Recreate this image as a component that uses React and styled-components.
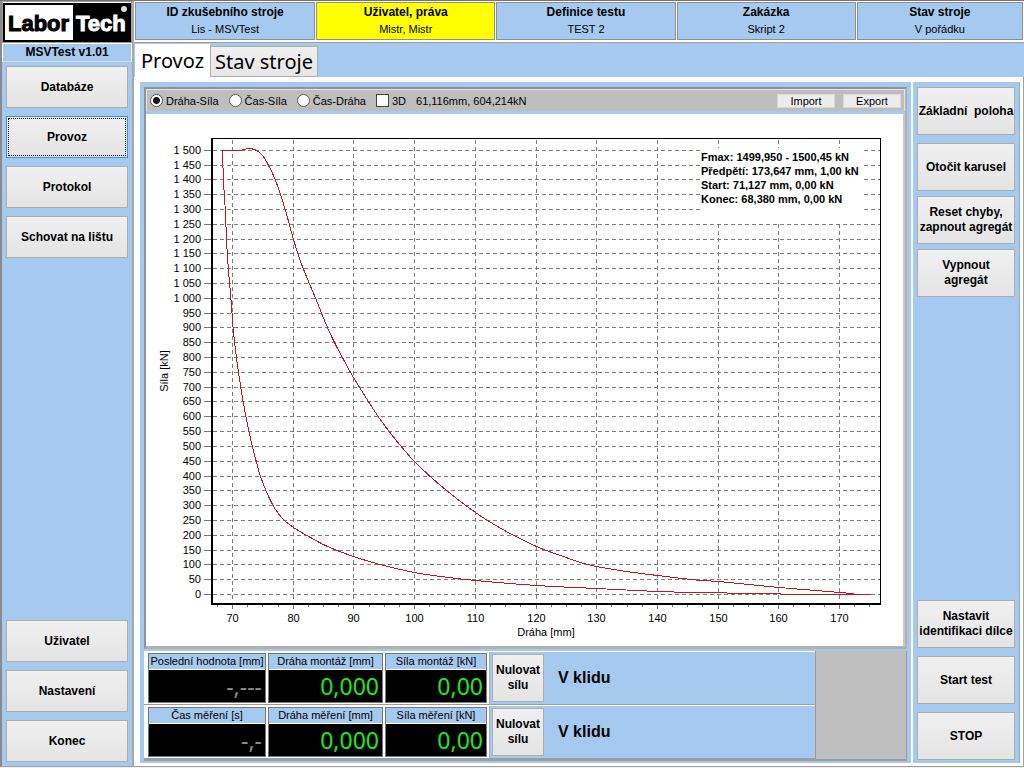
import React, { useState } from 'react';
import styled, { createGlobalStyle } from 'styled-components';

const BLUE = '#a6c9ef';
const SANS = '"Liberation Sans", Arial, sans-serif';
const TAHOMA = 'Tahoma, "Noto Sans", sans-serif';

const Global = createGlobalStyle`
  *, *::before, *::after { box-sizing: border-box; }
  body { margin: 0; background: #fff; color: #000; font-family: ${SANS}; font-size: 12px; }
`;

const Page = styled.div`
  display: grid;
  grid-template-columns: 134px minmax(0, 1fr);
  min-height: 100vh;
  border-top: 1px solid #777273;
  border-bottom: 1px solid #f0f0f0;
`;

const Sidebar = styled.aside`
  display: flex;
  flex-direction: column;
  background: ${BLUE};
  border-left: 2px solid #8a8a8c;
  border-right: 2px solid #a9a9a9;
  border-bottom: 1px solid #a0a0a0;
`;

const LogoBox = styled.div`
  height: 42px;
  background: #fff;
  border: 1px solid #999;
  svg { display: block; width: 100%; height: 100%; }
`;

const Version = styled.div`
  height: 19px;
  line-height: 17px;
  text-align: center;
  font-weight: bold;
  border: 1px solid #fff;
  border-bottom-color: #d8d8d8;
`;

const Nav = styled.nav`
  flex: 1;
  display: flex;
  flex-direction: column;
  gap: 8px;
  padding: 4px;
`;

const Spacer = styled.div`
  flex: 1;
`;

const Button = styled.button`
  width: 100%;
  height: ${(p) => (p.$tall ? 48 : 42)}px;
  padding: 0;
  border: 1px solid ${(p) => (p.$focused ? '#3c8ee0' : '#adadad')};
  outline: ${(p) => (p.$focused ? '1px dotted #000' : 'none')};
  outline-offset: -3px;
  border-radius: 0;
  background: linear-gradient(#f0f0f0, #e4e4e4);
  color: #000;
  font: bold 12px/15px ${SANS};
  white-space: pre-line;
`;

const Main = styled.main`
  display: flex;
  flex-direction: column;
  min-width: 0;
`;

const Header = styled.header`
  display: grid;
  grid-template-columns: 181fr 180fr 180fr 180fr 167fr;
  gap: 1px;
  height: 42px;
  padding: 1px 1px 2px;
  background: #fff;
  border-bottom: 1px solid #a0a0a0;
`;

const HeaderCell = styled.div`
  display: flex;
  flex-direction: column;
  align-items: center;
  border: 1px solid #8c8f94;
  background: ${(p) => (p.$alert ? '#ffff00' : BLUE)};
  font-size: 11px;
  line-height: 17px;
  padding-top: 1px;
`;

const HeaderTitle = styled.b`
  font-size: 12px;
`;

const Tabs = styled.div`
  display: flex;
  align-items: flex-end;
  height: 34px;
  background: ${BLUE};
  padding-left: 1px;
`;

const Tab = styled.button`
  height: ${(p) => (p.$active ? 33 : 31)}px;
  width: ${(p) => (p.$active ? 75 : 108)}px;
  padding: 0;
  border: ${(p) => (p.$active ? '0' : '1px solid #adadad')};
  background: ${(p) => (p.$active ? '#fff' : 'linear-gradient(#f0f0f0, #e6e6e6)')};
  font: 20px/28px ${TAHOMA};
  text-align: center;
  white-space: nowrap;
`;

const Panel = styled.div`
  flex: 1;
  display: grid;
  grid-template-columns: minmax(0, 1fr) 107px;
  gap: 2px;
  padding: 5px 3px 3px 6px;
  background: #fff;
  border-right: 1px solid #a0a0a0;
  border-bottom: 1px solid #a0a0a0;
`;

const Work = styled.section`
  display: flex;
  flex-direction: column;
  padding: 5px 4px 2px;
  background: ${BLUE};
`;

const ChartPanel = styled.div`
  flex: 1;
  display: flex;
  flex-direction: column;
  border: 2px solid #8f9296;
  border-right-color: #b0b0b0;
  border-bottom-color: #b0b0b0;
  background: #fff;
`;

const Toolbar = styled.div`
  display: flex;
  align-items: center;
  height: 22px;
  padding: 0 3px;
  background: #bebebe;
  border: 1px solid #e4e4e4;
  border-bottom: 0;
  font-size: 11px;
`;

const Option = styled.label`
  display: flex;
  align-items: center;
  gap: 3px;
  margin-right: 10px;
`;

const Radio = styled.input.attrs({ type: 'radio' })`
  appearance: none;
  width: 13px;
  height: 13px;
  margin: 0;
  border: 1px solid #555;
  border-radius: 50%;
  background: #fff;
  &:checked { background: radial-gradient(circle, #111 0 3px, #fff 4px); }
`;

const Check = styled.input.attrs({ type: 'checkbox' })`
  appearance: none;
  width: 13px;
  height: 13px;
  margin: 0;
  border: 1px solid #444;
  background: #fff;
  &:checked { background: #333; }
`;

const SmallButton = styled.button`
  width: 58px;
  height: 14px;
  margin-left: 8px;
  padding: 0;
  border: 1px solid #d8d8d8;
  background: #ececec;
  font: 11px/12px ${SANS};
`;

const ChartArea = styled.div`
  flex: 1;
  display: flex;
  border-top: 3px solid ${BLUE};
  border-right: 2px solid #c8c8c8;
  border-bottom: 1px solid #b4b4b4;
`;

const ChartSvg = styled.svg`
  flex: 1;
  width: 100%;
  min-height: 300px;
  text { font-family: ${SANS}; font-size: 11px; fill: #000; }
`;

const Readouts = styled.div`
  display: grid;
  grid-template-columns: minmax(0, 1fr) 92px;
  height: 110px;
  margin-top: 2px;
  border-bottom: 2px solid #9c9c9c;
`;

const ReadoutRow = styled.div`
  display: grid;
  grid-template-columns: 118px 115px 102px minmax(0, 1fr);
  column-gap: 2px;
  height: 54px;
  padding: 2px 0 0 4px;
  background: #fff;
  border-bottom: 1px solid #9c9c9c;
`;

const Cell = styled.div`
  display: flex;
  flex-direction: column;
  height: 50px;
  border: 1px solid #777;
`;

const CellLabel = styled.div`
  height: 16px;
  background: ${BLUE};
  border-bottom: 1px solid #fff;
  font: 11px/15px ${SANS};
  text-align: center;
  white-space: nowrap;
`;

const CellValue = styled.output`
  flex: 1;
  padding-right: 3px;
  background: #000;
  color: ${(p) => (p.$idle ? '#8c8c8c' : '#1fe81f')};
  font: 23px/32px ${TAHOMA};
  text-align: right;
`;

const Status = styled.div`
  display: flex;
  align-items: center;
  gap: 14px;
  margin-top: -1px;
  height: 52px;
  padding-left: 2px;
  background: ${BLUE};
  border-left: 1px solid #aaa;
  font-size: 16px;
  font-weight: bold;
`;

const ResetBox = styled.div`
  width: 52px;
`;

const Filler = styled.div`
  background: #bfbfbf;
  border-left: 1px solid #999;
  border-right: 1px solid #999;
`;

const Actions = styled.aside`
  display: flex;
  flex-direction: column;
  gap: 8px;
  padding: 5px 4px 3px;
  background: ${BLUE};
  border-right: 1px solid #8fa8c4;
`;

const ActionGroup = styled.div`
  display: flex;
  flex-direction: column;
  gap: 5px;
`;

const headerCells = [
  ['ID zkušebního stroje', 'Lis - MSVTest'],
  ['Uživatel, práva', 'Mistr, Mistr', true],
  ['Definice testu', 'TEST 2'],
  ['Zakázka', 'Skript 2'],
  ['Stav stroje', 'V pořádku'],
];

const readouts = [
  [['Poslední hodnota [mm]', '-,---', true], ['Dráha montáž [mm]', '0,000'], ['Síla montáž [kN]', '0,00']],
  [['Čas měření [s]', '-,-', true], ['Dráha měření [mm]', '0,000'], ['Síla měření [kN]', '0,00']],
];

const loading = [
  [222, 150], [238, 150], [243, 149], [249, 148], [256, 150], [262, 155], [267, 163], [273, 175], [279, 191],
  [285, 210], [293, 239], [300, 261], [308, 281], [316, 300], [324, 320], [333, 340], [343, 359], [353, 377],
  [377, 415], [395, 439], [414, 461], [440, 485], [475, 512], [504, 530], [536, 546], [560, 555], [580, 562],
  [596, 566], [626, 571], [657, 575], [700, 580], [718, 581], [779, 587], [840, 592], [858, 594], [870, 594],
];

const unloading = [
  [222, 150], [223, 181], [225, 213], [226, 240], [228, 270], [231, 305], [233, 332], [237, 365], [243, 403],
  [250, 438], [255, 458], [260, 476], [268, 496], [275, 509], [283, 519], [293, 527], [310, 537], [327, 546],
  [353, 556], [383, 565], [414, 572], [440, 576], [475, 580], [536, 585], [596, 588], [657, 591], [697, 592],
  [756, 593], [810, 594], [870, 594],
];

// Catmull-Rom spline through the measured points
function smooth(pts) {
  let d = `M${pts[0]}`;
  for (let i = 0; i < pts.length - 1; i += 1) {
    const [a, b, c, e] = [pts[i - 1] || pts[i], pts[i], pts[i + 1], pts[i + 2] || pts[i + 1]];
    d += ` C${b[0] + (c[0] - a[0]) / 6},${b[1] + (c[1] - a[1]) / 6} ${c[0] - (e[0] - b[0]) / 6},${c[1] - (e[1] - b[1]) / 6} ${c}`;
  }
  return d;
}

const px = (v) => Math.round(232 + (v - 70) * 6.07) + 0.5;
const py = (v) => Math.round(594 - v * 0.2962) + 0.5;
const xTicks = Array.from({ length: 11 }, (_, i) => 70 + i * 10);
const xMinor = Array.from({ length: 44 }, (_, i) => 67.5 + i * 2.5);
const yTicks = Array.from({ length: 31 }, (_, i) => i * 50);
const notes = [
  'Fmax: 1499,950 - 1500,45 kN',
  'Předpětí: 173,647 mm, 1,00 kN',
  'Start: 71,127 mm, 0,00 kN',
  'Konec: 68,380 mm, 0,00 kN',
];

function Chart() {
  return (
    <ChartSvg viewBox="146 114 757 532" role="img" aria-label="Dráha-Síla">
      <g stroke="#7c7c7c" strokeDasharray="4 3" shapeRendering="crispEdges">
        {xTicks.map((v) => <line key={v} x1={px(v)} x2={px(v)} y1="140" y2="602" />)}
        {yTicks.map((v) => <line key={v} x1="213" x2="880" y1={py(v)} y2={py(v)} />)}
      </g>
      <g stroke="#777" shapeRendering="crispEdges">
        {yTicks.map((v) => <line key={v} x1="204" x2="211" y1={py(v)} y2={py(v)} />)}
        {xTicks.map((v) => <line key={v} x1={px(v)} x2={px(v)} y1="604" y2="609" />)}
        {xMinor.map((v) => <line key={v} x1={px(v)} x2={px(v)} y1="604" y2="607" />)}
      </g>
      <rect x="701" y="148" width="161" height="75" fill="#fff" />
      <g fill="#000" shapeRendering="crispEdges">
        <rect x="211" y="138" width="2" height="467" />
        <rect x="211" y="603" width="670" height="2" />
        <rect x="211" y="138" width="670" height="1" />
        <rect x="880" y="138" width="1" height="467" />
      </g>
      <g fill="none" stroke="#c4141f" shapeRendering="crispEdges" transform="translate(.5 .5)">
        <path d={smooth(loading)} />
        <path d={smooth(unloading)} />
      </g>
      {yTicks.map((v) => (
        <text key={v} x="201" y={py(v) + 3.5} textAnchor="end">
          {v >= 1000 ? `1 ${String(v - 1000).padStart(3, '0')}` : v}
        </text>
      ))}
      {xTicks.map((v) => <text key={v} x={px(v)} y="622" textAnchor="middle">{v}</text>)}
      <text x="546" y="636" textAnchor="middle">Dráha [mm]</text>
      <text transform="translate(168 371) rotate(-90)" textAnchor="middle">Síla [kN]</text>
      <g fontWeight="bold">
        {notes.map((n, i) => <text key={n} x="701" y={161 + i * 14}>{n}</text>)}
      </g>
    </ChartSvg>
  );
}

function Logo() {
  return (
    <LogoBox>
      <svg viewBox="3 2 128 40" role="img" aria-label="LaborTech">
        <rect x="3" y="3" width="128" height="39" fill="#000" />
        <rect x="5" y="5" width="68" height="35" fill="#fff" />
        <g fontFamily='Impact, "Liberation Sans", sans-serif' fontWeight="bold" fontSize="22">
          <text x="8" y="31" stroke="#000" strokeWidth="1">Labor</text>
          <text x="76" y="31" fill="#fff" stroke="#fff" strokeWidth="1">Tech</text>
        </g>
        <circle cx="124" cy="9" r="3" fill="#ddd" />
      </svg>
    </LogoBox>
  );
}

export default function App() {
  const [mode, setMode] = useState('Dráha-Síla');
  return (
    <>
      <Global />
      <Page>
        <Sidebar>
          <Logo />
          <Version>MSVTest v1.01</Version>
          <Nav>
            <Button>Databáze</Button>
            <Button $focused>Provoz</Button>
            <Button>Protokol</Button>
            <Button>Schovat na lištu</Button>
            <Spacer />
            <Button>Uživatel</Button>
            <Button>Nastavení</Button>
            <Button>Konec</Button>
          </Nav>
        </Sidebar>
        <Main>
          <Header>
            {headerCells.map(([title, value, alert]) => (
              <HeaderCell key={title} $alert={alert}>
                <HeaderTitle>{title}</HeaderTitle>
                <span>{value}</span>
              </HeaderCell>
            ))}
          </Header>
          <Tabs role="tablist">
            <Tab role="tab" aria-selected="true" $active>Provoz</Tab>
            <Tab role="tab" aria-selected="false">Stav stroje</Tab>
          </Tabs>
          <Panel>
            <Work>
              <ChartPanel>
                <Toolbar>
                  {['Dráha-Síla', 'Čas-Síla', 'Čas-Dráha'].map((m) => (
                    <Option key={m}>
                      <Radio name="mode" checked={mode === m} onChange={() => setMode(m)} />
                      {m}
                    </Option>
                  ))}
                  <Option><Check />3D</Option>
                  <span>61,116mm, 604,214kN</span>
                  <Spacer />
                  <SmallButton>Import</SmallButton>
                  <SmallButton>Export</SmallButton>
                </Toolbar>
                <ChartArea><Chart /></ChartArea>
              </ChartPanel>
              <Readouts>
                <div>
                  {readouts.map((row) => (
                    <ReadoutRow key={row[0][0]}>
                      {row.map(([label, value, idle]) => (
                        <Cell key={label}>
                          <CellLabel>{label}</CellLabel>
                          <CellValue aria-label={label} $idle={idle}>{value}</CellValue>
                        </Cell>
                      ))}
                      <Status>
                        <ResetBox><Button $tall>{'Nulovat\nsílu'}</Button></ResetBox>
                        V klidu
                      </Status>
                    </ReadoutRow>
                  ))}
                </div>
                <Filler />
              </Readouts>
            </Work>
            <Actions>
              <Button $tall>Základní&nbsp; poloha</Button>
              <ActionGroup>
                <Button $tall>Otočit karusel</Button>
                <Button $tall>{'Reset chyby,\nzapnout agregát'}</Button>
                <Button $tall>{'Vypnout\nagregát'}</Button>
              </ActionGroup>
              <Spacer />
              <Button $tall>{'Nastavit\nidentifikaci dílce'}</Button>
              <Button $tall>Start test</Button>
              <Button $tall>STOP</Button>
            </Actions>
          </Panel>
        </Main>
      </Page>
    </>
  );
}
